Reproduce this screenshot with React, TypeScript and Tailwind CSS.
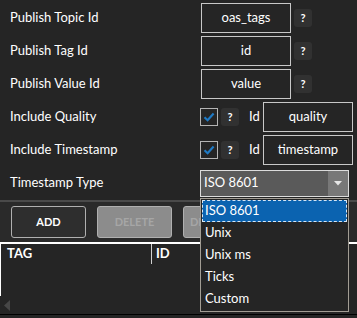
import { ReactNode } from "react";

const FONT = { fontFamily: "Lato, 'Noto Sans', sans-serif" };

function Help() {
  return (
    <div className="w-[18px] h-[18px] shrink-0 rounded-[3px] bg-[#313131] flex items-center justify-center text-[11px] font-bold text-white">
      ?
    </div>
  );
}

function TextBox({ value, className = "" }: { value: string; className?: string }) {
  return (
    <div
      className={`w-[90px] h-[30px] shrink-0 border border-[#c8c8c8] flex items-center justify-center text-[13px] text-white ${className}`}
    >
      {value}
    </div>
  );
}

function Check() {
  return (
    <div className="w-[18px] h-[18px] shrink-0 border border-[#b4b4b4] flex items-center justify-center">
      <svg width="12" height="10" viewBox="0 0 12 10">
        <path d="M1.5 5.2 L4.6 8.2 L10.6 1.5" fill="none" stroke="#1f7ac4" strokeWidth="2.2" />
      </svg>
    </div>
  );
}

function Row({ label, children }: { label: string; children: ReactNode }) {
  return (
    <div className="flex items-center h-[30px]">
      <div className="w-[200px] shrink-0 pl-[10px] text-[13px] text-white">{label}</div>
      {children}
    </div>
  );
}

const OPTIONS = ["ISO 8601", "Unix", "Unix ms", "Ticks", "Custom"];

export default function App() {
  return (
    <div className="relative w-[357px] h-[318px] bg-[#252525] overflow-hidden" style={FONT}>
      {/* form */}
      <div className="flex flex-col gap-[3px] pt-[3px] h-[200px]">
        <Row label="Publish Topic Id">
          <TextBox value="oas_tags" className="ml-px" />
          <div className="ml-[3px]"><Help /></div>
        </Row>
        <Row label="Publish Tag Id">
          <TextBox value="id" className="ml-px" />
          <div className="ml-[3px]"><Help /></div>
        </Row>
        <Row label="Publish Value Id">
          <TextBox value="value" className="ml-px" />
          <div className="ml-[3px]"><Help /></div>
        </Row>
        <Row label="Include Quality">
          <Check />
          <div className="ml-[3px]"><Help /></div>
          <span className="ml-[10px] w-[14px] text-[13px] text-white">Id</span>
          <TextBox value="quality" />
        </Row>
        <Row label="Include Timestamp">
          <Check />
          <div className="ml-[3px]"><Help /></div>
          <span className="ml-[10px] w-[14px] text-[13px] text-white">Id</span>
          <TextBox value="timestamp" />
        </Row>
        <Row label="Timestamp Type">
          <div className="w-[149px] h-[27px] border border-[#dcdcdc] bg-[#5a5a5a] flex">
            <div className="flex-1 flex items-center pl-[3px] text-[13px] text-white">ISO 8601</div>
            <div className="w-[20px] bg-[#787878] flex items-center justify-center">
              <svg width="8" height="5" viewBox="0 0 8 5">
                <path d="M0 0 H8 L4 4.5 Z" fill="#e6e6e6" />
              </svg>
            </div>
          </div>
        </Row>
      </div>

      {/* toolbar */}
      <div className="h-[42px] border-t-2 border-[#4a4a4a] bg-[#2a2a2a] flex items-center gap-[11px] pl-[11px]">
        <button className="w-[75px] h-[32px] rounded-[3px] border border-[#b0b0b0] bg-[#2e2e2e] text-[11px] font-bold text-white">
          ADD
        </button>
        <button className="w-[75px] h-[32px] rounded-[3px] border border-[#b0b0b0] bg-[#8c8c8c] text-[11px] font-bold text-[#a6a6a6]">
          DELETE
        </button>
        <button className="w-[75px] h-[32px] rounded-[3px] border border-[#b0b0b0] bg-[#8c8c8c] text-[11px] font-bold text-[#a6a6a6]">
          DELETE ALL
        </button>
      </div>

      {/* table */}
      <div className="border-t-2 border-white">
        <div className="flex h-[52px] border-l border-white">
          <div className="w-[151px] h-[20px] flex items-center pl-[6px] text-[13px] font-bold text-white border-r border-[#d0d0d0]">
            TAG
          </div>
          <div className="h-[20px] flex items-center pl-[4px] text-[13px] font-bold text-white">ID</div>
        </div>
        <div className="h-[18px] flex items-center pl-[4px]">
          <svg width="6" height="11" viewBox="0 0 6 11">
            <path d="M6 0 V11 L0 5.5 Z" fill="#474747" />
          </svg>
        </div>
        <div className="h-px bg-black" />
      </div>

      {/* open dropdown */}
      <div className="absolute left-[200px] top-[198px] w-[149px] h-[114px] border border-[#a29d94] bg-[#252525] p-px">
        {OPTIONS.map((o, i) => (
          <div
            key={o}
            className={`h-[22px] flex items-center pl-[2px] text-[13px] text-white ${
              i === 0 ? "bg-[#0b63b0] border border-dashed border-[#d8e6f4]" : "border border-transparent"
            }`}
          >
            {o}
          </div>
        ))}
      </div>
    </div>
  );
}
